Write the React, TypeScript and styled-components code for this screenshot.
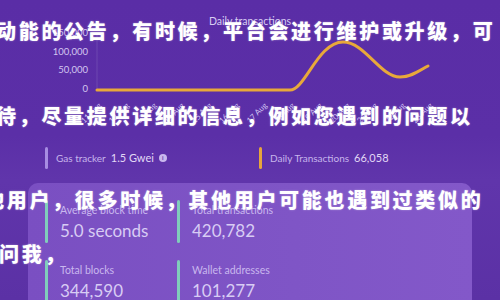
import * as React from "react";
import styled, { createGlobalStyle } from "styled-components";

const GlobalStyle = createGlobalStyle`
  html, body {
    margin: 0;
    padding: 0;
  }
  body {
    width: 500px;
    height: 300px;
    overflow: hidden;
    background: linear-gradient(180deg, #5a2da6 0%, #5b2fa7 45%, #6035ab 60%, #5b31a5 100%);
    font-family: Lato, "Noto Sans", sans-serif;
  }
`;

const Page = styled.div`
  position: relative;
  width: 500px;
  height: 300px;
  overflow: hidden;
`;

const ChartBox = styled.div`
  height: 132px;
`;

const TickerRow = styled.div`
  display: flex;
  align-items: center;
  height: 51px;
  padding-left: 45px;
  box-sizing: border-box;
`;

const Ticker = styled.div<{ $width: number }>`
  display: flex;
  align-items: center;
  width: ${p => p.$width}px;
  height: 22px;
`;

const Bar = styled.div<{ $color: string; $height: number }>`
  width: 3px;
  height: ${p => p.$height}px;
  border-radius: 2px;
  background: ${p => p.$color};
  flex-shrink: 0;
`;

const TickerLabel = styled.span`
  margin-left: 8px;
  font-size: 10px;
  color: #c7b5ec;
`;

const TickerValue = styled.span`
  margin-left: 5px;
  font-size: 11px;
  color: #e2d8f6;
`;

const InfoIcon = styled.span`
  display: inline-flex;
  align-items: center;
  justify-content: center;
  margin-left: 5px;
  width: 8px;
  height: 8px;
  border-radius: 50%;
  background: #c9b8ee;
  color: #6034aa;
  font-size: 6px;
  font-weight: 700;
  line-height: 1;
`;

const Card = styled.div`
  margin: 0 28px;
  height: 140px;
  border-radius: 10px 10px 0 0;
  background: linear-gradient(90deg, #7a4fc2 0%, #7f55c6 60%, #8358c9 100%);
  padding: 17px 0 0 17px;
  box-sizing: border-box;
  display: grid;
  grid-template-columns: 132px 132px;
  row-gap: 17px;
  align-content: start;
`;

const Stat = styled.div`
  display: flex;
  height: 43px;
`;

const StatText = styled.div`
  margin-left: 12px;
  padding-top: 4px;
  white-space: nowrap;
`;

const StatLabel = styled.div`
  font-size: 10.5px;
  line-height: 13px;
  color: #c9b7ee;
`;

const StatValue = styled.div`
  margin-top: 3px;
  font-size: 17px;
  line-height: 22px;
  color: #d8ccf4;
`;

const Overlay = styled.div`
  position: absolute;
  top: 0;
  left: 0;
  width: 500px;
  height: 300px;
  pointer-events: none;
`;

const Line = styled.div<{ $gap: number; $indent: number }>`
  margin-top: ${p => p.$gap}px;
  margin-left: ${p => p.$indent}px;
  height: 26px;
  line-height: 26px;
  font-family: "Noto Sans CJK SC", sans-serif;
  font-weight: 900;
  font-size: 20px;
  letter-spacing: 2.7px;
  white-space: nowrap;
  color: #ffffff;
  text-shadow: 0 0 2px rgba(255, 255, 255, 0.4);
`;

const days = ["11", "12", "13", "14", "15", "16", "17", "18", "19", "20", "21", "22", "23"];

function Chart() {
  return (
    <svg width="500" height="132" viewBox="0 0 500 132">
      <text x="250" y="25" textAnchor="middle" fontSize="10.5" fill="#d8cdf2" fontFamily="Lato, sans-serif">
        Daily transactions
      </text>
      {[
        ["150,000", 36],
        ["100,000", 55],
        ["50,000", 73],
        ["0", 92],
      ].map(([t, y]) => (
        <text key={t} x="88" y={y} textAnchor="end" fontSize="9.5" fill="#d3c6f0" fontFamily="Lato, sans-serif">
          {t}
        </text>
      ))}
      <line x1="97" y1="35" x2="97" y2="90" stroke="rgba(255,255,255,0.12)" strokeWidth="1" />
      {days.map((d, i) => {
        const x = 102 + i * 27.6;
        return (
          <text
            key={d}
            x={x}
            y={106}
            textAnchor="end"
            fontSize="8"
            fill="#d2c3f2"
            fontFamily="Lato, sans-serif"
            transform={`rotate(-45 ${x} 106)`}
          >
            {d} Aug
          </text>
        );
      })}
      <path
        d="M97 90 L290 90 C305 90 318 42 343 42 C365 42 380 77 400 77 C412 77 420 70 428 66"
        fill="none"
        stroke="#e8a83a"
        strokeWidth="3"
        strokeLinecap="round"
      />
    </svg>
  );
}

const stats = [
  { label: "Average block time", value: "5.0 seconds" },
  { label: "Total transactions", value: "420,782" },
  { label: "Total blocks", value: "344,590" },
  { label: "Wallet addresses", value: "101,277" },
];

export default function App() {
  return (
    <Page>
      <GlobalStyle />
      <ChartBox>
        <Chart />
      </ChartBox>
      <TickerRow>
        <Ticker $width={214}>
          <Bar $color="#a78ce2" $height={22} />
          <TickerLabel>Gas tracker</TickerLabel>
          <TickerValue>1.5 Gwei</TickerValue>
          <InfoIcon>i</InfoIcon>
        </Ticker>
        <Ticker $width={200}>
          <Bar $color="#e7a53c" $height={22} />
          <TickerLabel>Daily Transactions</TickerLabel>
          <TickerValue>66,058</TickerValue>
        </Ticker>
      </TickerRow>
      <Card>
        {stats.map(s => (
          <Stat key={s.label}>
            <Bar $color="#80cdbb" $height={43} />
            <StatText>
              <StatLabel>{s.label}</StatLabel>
              <StatValue>{s.value}</StatValue>
            </StatText>
          </Stat>
        ))}
      </Card>
      <Overlay>
        <Line $gap={18} $indent={-4}>动能的公告，有时候，平台会进行维护或升级，可</Line>
        <Line $gap={59} $indent={-4}>待，尽量提供详细的信息，例如您遇到的问题以</Line>
        <Line $gap={58} $indent={-16}>他用户，很多时候，其他用户可能也遇到过类似的</Line>
        <Line $gap={28} $indent={-1}>问我，</Line>
      </Overlay>
    </Page>
  );
}
